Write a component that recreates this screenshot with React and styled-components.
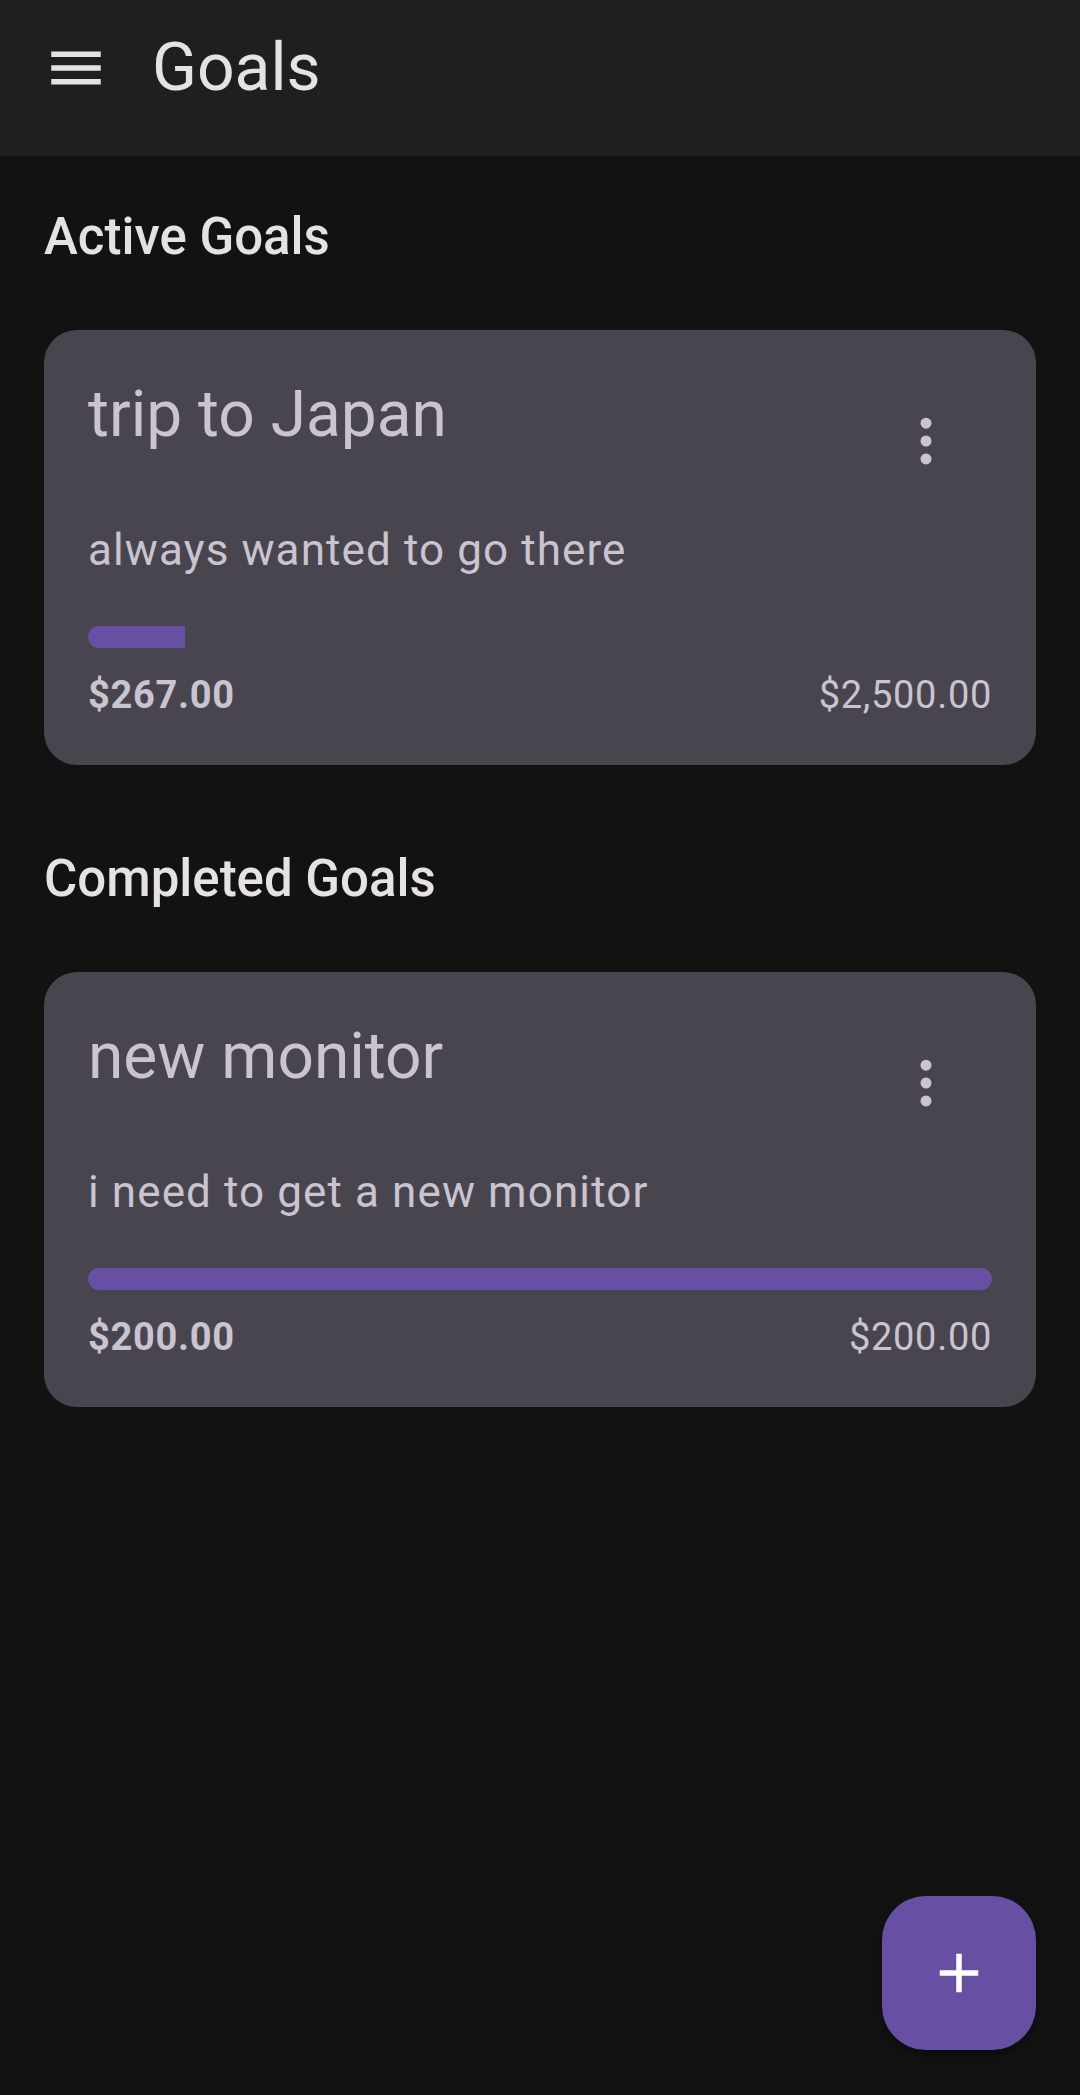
import React from "react";
import styled, { createGlobalStyle } from "styled-components";

const GlobalStyle = createGlobalStyle`
  html, body {
    margin: 0;
    padding: 0;
    background: #121212;
    font-family: Roboto, "Noto Sans", sans-serif;
  }
  * {
    box-sizing: border-box;
  }
`;

const goals = {
  active: [
    {
      title: "trip to Japan",
      description: "always wanted to go there",
      saved: 267,
      target: 2500,
    },
  ],
  completed: [
    {
      title: "new monitor",
      description: "i need to get a new monitor",
      saved: 200,
      target: 200,
    },
  ],
};

const money = (n) =>
  "$" +
  n.toLocaleString("en-US", { minimumFractionDigits: 2, maximumFractionDigits: 2 });

function MenuIcon() {
  return (
    <svg width="66" height="66" viewBox="0 0 24 24" fill="#e6e1e5">
      <path d="M3 18h18v-2H3v2zm0-5h18v-2H3v2zm0-7v2h18V6H3z" />
    </svg>
  );
}

function MoreIcon() {
  return (
    <svg width="66" height="66" viewBox="0 0 24 24" fill="#cac4d0">
      <circle cx="12" cy="5.5" r="2" />
      <circle cx="12" cy="12" r="2" />
      <circle cx="12" cy="18.5" r="2" />
    </svg>
  );
}

function PlusIcon() {
  return (
    <svg width="66" height="66" viewBox="0 0 24 24" fill="#ffffff">
      <path d="M19 13h-6v6h-2v-6H5v-2h6V5h2v6h6v2z" />
    </svg>
  );
}

function GoalCard({ goal }) {
  const pct = Math.min(goal.saved / goal.target, 1) * 100;
  return (
    <Card>
      <TopRow>
        <CardTitle>{goal.title}</CardTitle>
        <IconButton>
          <MoreIcon />
        </IconButton>
      </TopRow>
      <Description>{goal.description}</Description>
      <Track>
        <Fill style={{ width: `${pct}%` }} />
      </Track>
      <Amounts>
        <Amount bold>{money(goal.saved)}</Amount>
        <Amount>{money(goal.target)}</Amount>
      </Amounts>
    </Card>
  );
}

export default function App() {
  return (
    <Page>
      <GlobalStyle />
      <TopBar>
        <MenuButton>
          <MenuIcon />
        </MenuButton>
        <BarTitle>Goals</BarTitle>
      </TopBar>
      <Content>
        <SectionTitle>Active Goals</SectionTitle>
        {goals.active.map((g) => (
          <GoalCard key={g.title} goal={g} />
        ))}
        <SectionTitle>Completed Goals</SectionTitle>
        {goals.completed.map((g) => (
          <GoalCard key={g.title} goal={g} />
        ))}
      </Content>
      <Fab>
        <PlusIcon />
      </Fab>
    </Page>
  );
}

const Page = styled.div`
  min-height: 2095px;
  background: #121212;
`;

const TopBar = styled.header`
  height: 156px;
  background: #1f1f1f;
  display: flex;
  align-items: center;
  padding: 0 0 20px 43px;
`;

const MenuButton = styled.div`
  width: 66px;
  height: 66px;
  display: flex;
  align-items: center;
  justify-content: center;
`;

const BarTitle = styled.h1`
  margin: 0 0 0 43px;
  font-size: 66px;
  line-height: 66px;
  font-weight: 400;
  color: #e6e1e5;
`;

const Content = styled.main`
  padding: 0 44px;
  display: flex;
  flex-direction: column;
`;

const SectionTitle = styled.h2`
  margin: 50px 0 63px;
  font-size: 51px;
  line-height: 1.2;
  font-weight: 500;
  color: #e6e1e5;

  & ~ & {
    margin-top: 83px;
  }
`;

const Card = styled.section`
  height: 435px;
  background: #49454f;
  border-radius: 33px;
  padding: 45px 44px 0 44px;
  display: flex;
  flex-direction: column;
`;

const TopRow = styled.div`
  display: flex;
  align-items: flex-start;
  justify-content: space-between;
`;

const CardTitle = styled.h3`
  margin: 2px 0 0;
  font-size: 64px;
  line-height: 1.2;
  font-weight: 400;
  color: #cac4d0;
`;

const IconButton = styled.div`
  width: 132px;
  height: 132px;
  display: flex;
  align-items: center;
  justify-content: center;
`;

const Description = styled.p`
  margin: 10px 0 0;
  font-size: 44px;
  line-height: 66px;
  letter-spacing: 1.1px;
  color: #cac4d0;
`;

const Track = styled.div`
  margin-top: 43px;
  height: 22px;
  border-radius: 11px;
  overflow: hidden;
  background: #49454f;
`;

const Fill = styled.div`
  height: 100%;
  background: #6750a4;
`;

const Amounts = styled.div`
  margin-top: 19px;
  display: flex;
  justify-content: space-between;
`;

const Amount = styled.span`
  font-size: 38px;
  line-height: 57px;
  letter-spacing: 0.7px;
  font-weight: ${(p) => (p.bold ? 700 : 400)};
  color: #cac4d0;
`;

const Fab = styled.button`
  position: fixed;
  right: 44px;
  bottom: 45px;
  width: 154px;
  height: 154px;
  border: none;
  border-radius: 44px;
  background: #6750a4;
  box-shadow: 0 4px 10px rgba(0, 0, 0, 0.35);
  display: flex;
  align-items: center;
  justify-content: center;
  padding: 0;
`;
